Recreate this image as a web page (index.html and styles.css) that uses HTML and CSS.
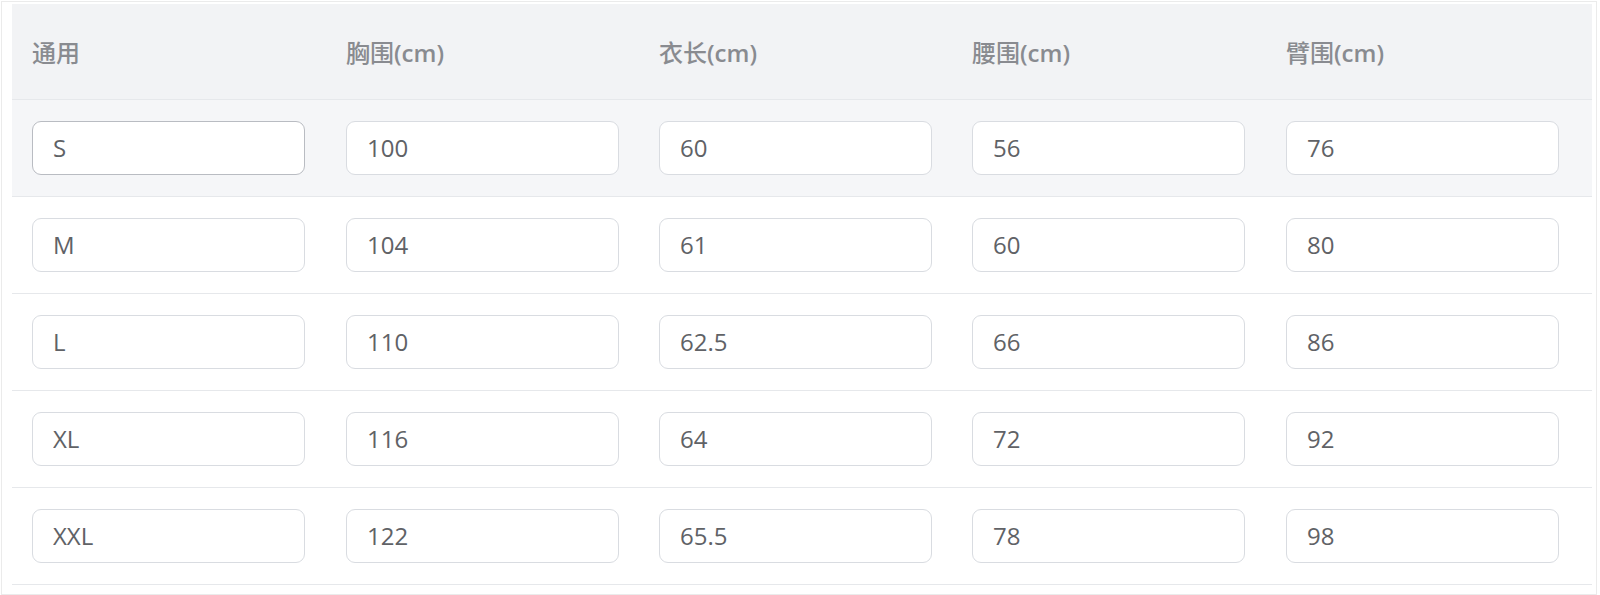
FILE: index.html
```html
<!DOCTYPE html>
<html lang="zh-CN">
<head>
<meta charset="utf-8">
<title>尺码表</title>
<link rel="stylesheet" href="styles.css">
</head>
<body>
<div class="frame">
  <table class="size-table">
    <colgroup>
      <col class="c1"><col class="c2"><col class="c3"><col class="c4"><col class="c5">
    </colgroup>
    <thead>
      <tr>
        <th>通用</th>
        <th>胸围<span class="unit">(cm)</span></th>
        <th>衣长<span class="unit">(cm)</span></th>
        <th>腰围<span class="unit">(cm)</span></th>
        <th>臂围<span class="unit">(cm)</span></th>
      </tr>
    </thead>
    <tbody>
      <tr class="hover">
        <td><input class="field field-active" value="S"></td>
        <td><input class="field" value="100"></td>
        <td><input class="field" value="60"></td>
        <td><input class="field" value="56"></td>
        <td><input class="field" value="76"></td>
      </tr>
      <tr>
        <td><input class="field" value="M"></td>
        <td><input class="field" value="104"></td>
        <td><input class="field" value="61"></td>
        <td><input class="field" value="60"></td>
        <td><input class="field" value="80"></td>
      </tr>
      <tr>
        <td><input class="field" value="L"></td>
        <td><input class="field" value="110"></td>
        <td><input class="field" value="62.5"></td>
        <td><input class="field" value="66"></td>
        <td><input class="field" value="86"></td>
      </tr>
      <tr>
        <td><input class="field" value="XL"></td>
        <td><input class="field" value="116"></td>
        <td><input class="field" value="64"></td>
        <td><input class="field" value="72"></td>
        <td><input class="field" value="92"></td>
      </tr>
      <tr>
        <td><input class="field" value="XXL"></td>
        <td><input class="field" value="122"></td>
        <td><input class="field" value="65.5"></td>
        <td><input class="field" value="78"></td>
        <td><input class="field" value="98"></td>
      </tr>
    </tbody>
  </table>
</div>
</body>
</html>
```
FILE: styles.css
```css
html, body {
  margin: 0;
  padding: 0;
  background: #ffffff;
}

body {
  font-family: "Open Sans", "Noto Sans CJK SC", sans-serif;
}

.frame {
  margin: 1px 0 0 1px;
  width: 1580px;
  height: 583px;
  padding: 2px 4px 7px 10px;
  border: 1px solid #ebebeb;
}

.size-table {
  width: 1580px;
  border-collapse: collapse;
  table-layout: fixed;
}

.c1 { width: 314px; }
.c2 { width: 313px; }
.c3 { width: 313px; }
.c4 { width: 314px; }
.c5 { width: 326px; }

.size-table th {
  height: 95px;
  padding: 0 20px;
  background: #f2f3f5;
  border-bottom: 1px solid #e6e8eb;
  color: #898b90;
  font-size: 24px;
  font-weight: 500;
  text-align: left;
  vertical-align: middle;
  box-sizing: border-box;
}

.unit {
  font-weight: 600;
}

.size-table td {
  height: 97px;
  padding: 0 20px;
  border-bottom: 1px solid #e6e8eb;
  vertical-align: middle;
  box-sizing: border-box;
}

.size-table tr.hover td {
  background: #f5f6f8;
}

.field {
  display: block;
  width: 273px;
  height: 54px;
  box-sizing: border-box;
  padding: 0 20px;
  margin: 0;
  border: 1px solid #d9dce1;
  border-radius: 9px;
  background: #ffffff;
  color: #606266;
  font-family: "Open Sans", "Noto Sans CJK SC", sans-serif;
  font-size: 24px;
  outline: none;
}

.field-active {
  border-color: #b9bcc2;
}
```
